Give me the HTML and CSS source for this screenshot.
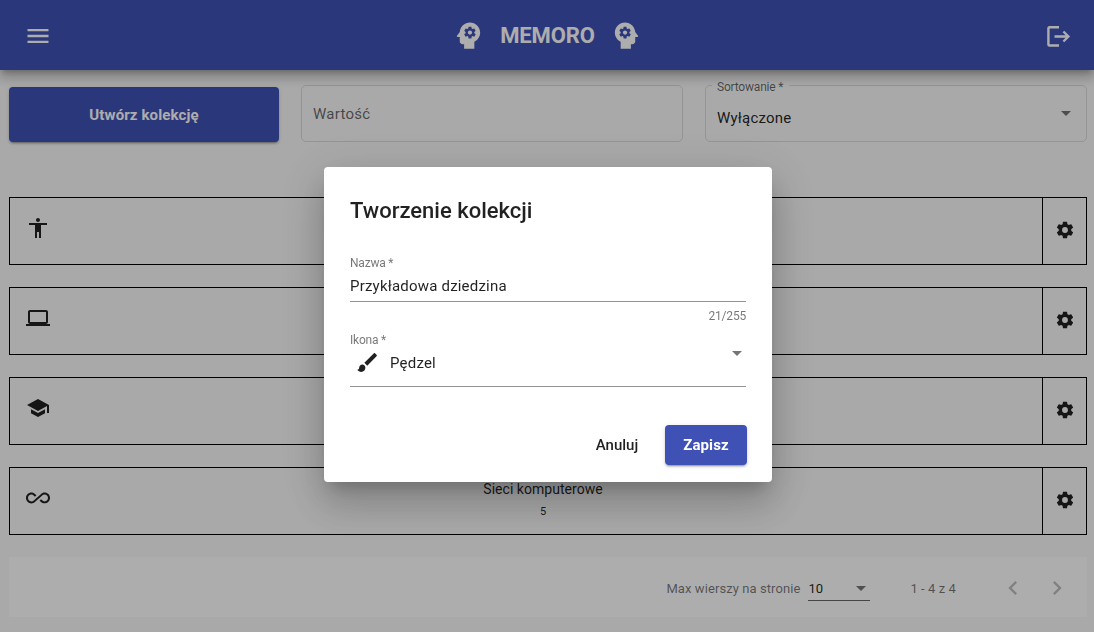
FILE: index.html
```html
<!DOCTYPE html>
<html lang="pl">
<head>
<meta charset="utf-8">
<title>Memoro</title>
<link rel="stylesheet" href="styles.css">
</head>
<body>
<svg class="sprite" aria-hidden="true">
  <symbol id="head" viewBox="0 0 24 24"><path fill-rule="evenodd" d="M13 3C9.25 3 6.2 5.94 6.02 9.64L4.1 12.2c-.25.33-.01.8.4.8H6v3c0 1.1.9 2 2 2h1v3h7v-4.68c2.36-1.12 4-3.53 4-6.32 0-3.87-3.13-7-7-7zm3 7c0 .13-.01.26-.02.39l.83.66c.08.06.1.16.05.25l-.8 1.39c-.05.09-.16.12-.24.09l-.99-.4c-.21.16-.43.29-.67.39L14 13.83c-.01.1-.1.17-.2.17h-1.6c-.1 0-.18-.07-.2-.17l-.15-1.06c-.25-.1-.47-.23-.68-.39l-.99.4c-.09.03-.2 0-.25-.09l-.8-1.39c-.05-.08-.03-.19.05-.25l.84-.66c-.01-.13-.02-.26-.02-.39s.02-.27.04-.39l-.85-.66c-.08-.06-.1-.16-.05-.26l.8-1.38c.05-.09.15-.12.24-.09l1 .4c.2-.15.43-.29.67-.39L12 6.17c.02-.1.1-.17.2-.17h1.6c.1 0 .18.07.2.17l.15 1.06c.24.1.46.23.67.39l1-.4c.09-.03.2 0 .24.09l.8 1.38c.05.09.03.2-.05.26l-.85.66c.03.12.04.25.04.39z"/><circle cx="13" cy="10" r="1.45"/></symbol>
  <symbol id="cog" viewBox="0 0 24 24"><path d="M12 15.5A3.5 3.5 0 0 1 8.500 12 3.500 3.500 0 0 1 12 8.500a3.500 3.500 0 0 1 3.500 3.500 3.500 3.500 0 0 1-3.500 3.500m7.430-2.530c.040-.320.070-.640.070-.970s-.030-.660-.070-1l2.110-1.630c.190-.150.240-.420.120-.640l-2-3.460c-.120-.220-.390-.310-.610-.220l-2.490 1c-.520-.390-1.060-.730-1.690-.980l-.370-2.650A.506.506 0 0 0 14 2h-4c-.250 0-.460.180-.500.420l-.370 2.650c-.630.250-1.170.590-1.690.980l-2.490-1c-.220-.090-.490 0-.610.220l-2 3.460c-.130.220-.070.490.120.640L4.570 11c-.040.340-.070.670-.070 1s.030.650.070.970l-2.110 1.660c-.190.150-.250.420-.120.640l2 3.460c.120.220.390.300.610.220l2.490-1.010c.520.400 1.060.740 1.690.990l.370 2.650c.040.240.250.420.500.420h4c.250 0 .460-.180.500-.420l.370-2.650c.630-.260 1.170-.590 1.690-.990l2.490 1.010c.220.080.490 0 .610-.220l2-3.460c.120-.220.070-.490-.120-.640z"/></symbol>
</svg>

<header class="toolbar">
  <svg class="menu-icon" viewBox="0 0 24 24"><path d="M3 18h18v-2H3v2zm0-5h18v-2H3v2zm0-7v2h18V6H3z"/></svg>
  <div class="brand">
    <svg class="head-icon"><use href="#head"/></svg>
    <h1 class="brand-name">MEMORO</h1>
    <svg class="head-icon head-icon-flip"><use href="#head"/></svg>
  </div>
  <svg class="logout-icon" viewBox="0 0 25 23"><path d="M13 2.200H3.400a1 1 0 0 0-1 1v16.300a1 1 0 0 0 1 1H13M8.500 11.500H22.500M17.400 6.500l5 5-5 5"/></svg>
</header>

<main class="page">
  <section class="filters">
    <button class="create-button">Utwórz kolekcję</button>
    <div class="field">Wartość</div>
    <div class="field field-select">
      <span class="field-label">Sortowanie *</span>
      <span class="field-value">Wyłączone</span>
      <i class="arrow"></i>
    </div>
  </section>

  <section class="rows">
    <article class="row">
      <svg class="row-icon" viewBox="0 0 24 24"><path d="M12 2c1.100 0 2 .900 2 2s-.900 2-2 2-2-.900-2-2 .900-2 2-2zm9 7h-6v13h-2v-6h-2v6H9V9H3V7h18v2z"/></svg>
      <div class="row-text"></div>
      <div class="row-settings"><svg class="cog-icon"><use href="#cog"/></svg></div>
    </article>
    <article class="row">
      <svg class="row-icon" viewBox="0 0 24 24"><path d="M20 18c1.100 0 1.990-.900 1.990-2L22 6c0-1.100-.900-2-2-2H4c-1.100 0-2 .900-2 2v10c0 1.100.900 2 2 2H0v2h24v-2h-4zM4 6h16v10H4V6z"/></svg>
      <div class="row-text"></div>
      <div class="row-settings"><svg class="cog-icon"><use href="#cog"/></svg></div>
    </article>
    <article class="row">
      <svg class="row-icon" viewBox="0 0 24 24"><path d="M5 13.180v4L12 21l7-3.820v-4L12 17l-7-3.820zM12 3L1 9l11 6 9-4.910V17h2V9L12 3z"/></svg>
      <div class="row-text"></div>
      <div class="row-settings"><svg class="cog-icon"><use href="#cog"/></svg></div>
    </article>
    <article class="row">
      <svg class="row-icon" viewBox="0 0 24 24"><path d="M18.600 6.620c-1.440 0-2.800.560-3.770 1.530L12 10.660 10.480 12h.010L7.800 14.390c-.640.640-1.490.990-2.400.990-1.870 0-3.390-1.510-3.390-3.380S3.530 8.620 5.400 8.620c.910 0 1.760.350 2.440 1.030l1.130 1 1.510-1.340L9.220 8.200C8.200 7.180 6.840 6.620 5.400 6.620 2.420 6.620 0 9.040 0 12s2.420 5.380 5.400 5.380c1.440 0 2.800-.560 3.770-1.530l2.830-2.500.010.010L13.520 12h-.010l2.690-2.390c.640-.640 1.490-.990 2.400-.990 1.870 0 3.390 1.510 3.390 3.380s-1.520 3.380-3.390 3.380c-.900 0-1.760-.350-2.440-1.030l-1.140-1.010-1.510 1.340 1.270 1.120c1.020 1.010 2.370 1.570 3.820 1.570 2.980 0 5.400-2.410 5.400-5.380s-2.420-5.370-5.400-5.370z"/></svg>
      <div class="row-text"><span class="row-name">Sieci komputerowe</span><span class="row-count">5</span></div>
      <div class="row-settings"><svg class="cog-icon"><use href="#cog"/></svg></div>
    </article>
  </section>

  <footer class="paginator">
    <span class="page-label">Max wierszy na stronie</span>
    <span class="page-size">10<i class="arrow"></i></span>
    <span class="page-range">1 - 4 z 4</span>
    <svg class="page-icon" viewBox="0 0 24 24"><path d="M15.410 7.410L14 6l-6 6 6 6 1.410-1.410L10.830 12z"/></svg>
    <svg class="page-icon" viewBox="0 0 24 24"><path d="M10 6L8.590 7.410 13.170 12l-4.580 4.590L10 18l6-6z"/></svg>
  </footer>
</main>

<div class="backdrop">
  <div class="dialog">
    <h2 class="dialog-title">Tworzenie kolekcji</h2>
    <div class="input">
      <span class="input-label">Nazwa *</span>
      <span class="input-value">Przykładowa dziedzina</span>
    </div>
    <div class="counter">21/255</div>
    <div class="input input-icon">
      <span class="input-label">Ikona *</span>
      <div class="input-option">
        <svg class="brush-icon" viewBox="0 0 24 24"><path d="M7 14c-1.660 0-3 1.340-3 3 0 1.310-1.160 2-2 2 .920 1.220 2.490 2 4 2 2.210 0 4-1.790 4-4 0-1.660-1.340-3-3-3zm13.710-9.370l-1.340-1.340c-.390-.390-1.020-.390-1.410 0L9 12.250 11.750 15l8.960-8.960c.390-.390.390-1.020 0-1.410z"/></svg>
        <span class="input-value">Pędzel</span>
        <i class="arrow"></i>
      </div>
    </div>
    <div class="actions">
      <button class="cancel-button">Anuluj</button>
      <button class="save-button">Zapisz</button>
    </div>
  </div>
</div>
</body>
</html>
```

FILE: styles.css
```css
* { box-sizing: border-box; }

body {
  margin: 0;
  height: 632px;
  overflow: hidden;
  background: #fafafa;
  color: rgba(0, 0, 0, .87);
  font-family: Roboto, "Liberation Sans", sans-serif;
}

svg { display: block; flex: none; fill: currentColor; }
button { border: 0; font-family: inherit; }
.sprite { display: none; }

.arrow {
  border: 5px solid transparent;
  border-top-color: rgba(0, 0, 0, .54);
  border-bottom-width: 0;
}

/* Toolbar */
.toolbar {
  position: relative;
  display: flex;
  align-items: center;
  justify-content: space-between;
  height: 70px;
  padding: 0 23px;
  background: #3f51b5;
  color: #fff;
  box-shadow: 0 5px 5px -3px rgba(0, 0, 0, .2), 0 8px 10px 1px rgba(0, 0, 0, .14), 0 3px 14px 2px rgba(0, 0, 0, .12);
}
.menu-icon { width: 28px; height: 28px; margin: 2px 0 0 1px; }
.brand { display: flex; align-items: center; gap: 14px; margin-right: 3px; }
.brand-name { margin: 0; padding-top: 2px; font-size: 22px; line-height: 32px; font-weight: 700; letter-spacing: -.1px; }
.head-icon { width: 35px; height: 35px; }
.head-icon-flip { transform: scaleX(-1); }
.logout-icon {
  width: 25px;
  height: 23px;
  margin-top: 2px;
  fill: none;
  stroke: currentColor;
  stroke-width: 2.4;
}

/* Page */
.page { padding: 15px 7px 0 9px; }
.filters { display: grid; grid-template-columns: 270px 382px 382px; gap: 22px; }
.create-button {
  height: 55px;
  margin-top: 2px;
  padding-top: 2px;
  border-radius: 4px;
  background: #3f51b5;
  color: #fff;
  font-size: 15px;
  font-weight: 700;
  letter-spacing: .12px;
  box-shadow: 0 3px 1px -2px rgba(0, 0, 0, .2), 0 2px 2px rgba(0, 0, 0, .14), 0 1px 5px rgba(0, 0, 0, .12);
}
.field {
  display: flex;
  align-items: center;
  height: 57px;
  padding: 0 15px 0 11px;
  border: 1px solid rgba(0, 0, 0, .12);
  border-radius: 5px;
  color: rgba(0, 0, 0, .6);
  font-size: 15px;
  letter-spacing: .25px;
}
.field-select { position: relative; justify-content: space-between; }
.field-label {
  position: absolute;
  top: -8px;
  left: 6px;
  width: 77px;
  padding: 0 5px;
  background: linear-gradient(#f6f6f6, #f6f6f6) 0 7px / 100% 1px no-repeat;
  font-size: 12px;
  line-height: 18px;
  letter-spacing: -.2px;
  white-space: nowrap;
}
.field-value { padding-top: 8px; color: rgba(0, 0, 0, .87); letter-spacing: .2px; }

.rows { display: grid; gap: 22px; margin-top: 55px; }
.row { display: flex; height: 68px; border: 1px solid #000; }
.row-icon { width: 24px; height: 24px; margin: 18px 0 0 16px; }
.row-text {
  display: flex;
  flex: 1;
  flex-direction: column;
  align-items: center;
  padding: 11px 0 0 24px;
  margin-left: -30px;
}
.row-name { font-size: 14px; line-height: 20px; letter-spacing: .03px; }
.row-count { margin-top: 4px; font-size: 11px; line-height: 18px; }
.row-settings {
  display: flex;
  align-items: center;
  justify-content: center;
  width: 44px;
  padding: 0 0 2px 1px;
  border-left: 1px solid #000;
}
.cog-icon { width: 20px; height: 20px; }

.paginator {
  display: flex;
  align-items: center;
  justify-content: flex-end;
  height: 60px;
  margin-top: 22px;
  padding: 3px 16px 0 0;
  background: #fff;
  color: rgba(0, 0, 0, .54);
  font-size: 13px;
  letter-spacing: .08px;
}
.page-size {
  display: flex;
  align-items: center;
  justify-content: space-between;
  width: 62px;
  height: 24px;
  margin: 0 40px 0 8px;
  padding-right: 4px;
  border-bottom: 1px solid rgba(0, 0, 0, .6);
  color: rgba(0, 0, 0, .87);
}
.page-range { margin-right: 43px; }
.page-icon { width: 28px; height: 28px; margin-top: -1px; color: rgba(0, 0, 0, .26); }
.page-icon + .page-icon { margin-left: 16px; }

/* Dialog */
.backdrop {
  position: fixed;
  inset: 0;
  display: flex;
  justify-content: center;
  align-items: flex-start;
  padding: 167px 0 0 2px;
  background: rgba(0, 0, 0, .32);
}
.dialog {
  width: 448px;
  height: 315px;
  padding: 28px 26px 0;
  border-radius: 4px;
  background: #fff;
  box-shadow: 0 11px 15px -7px rgba(0, 0, 0, .2), 0 24px 38px 3px rgba(0, 0, 0, .14), 0 9px 46px 8px rgba(0, 0, 0, .12);
}
.dialog-title { margin: 0; font-size: 22px; line-height: 32px; font-weight: 500; }
.input {
  display: flex;
  flex-direction: column;
  height: 48px;
  margin-top: 27px;
  border-bottom: 1px solid rgba(0, 0, 0, .42);
}
.input-label { color: rgba(0, 0, 0, .54); font-size: 12px; line-height: 18px; letter-spacing: -.2px; }
.input-value { font-size: 15px; line-height: 28px; letter-spacing: .2px; }
.counter { color: rgba(0, 0, 0, .54); font-size: 12px; line-height: 18px; margin-top: 5px; text-align: right; letter-spacing: -.2px; }
.input-icon { height: 56px; margin-top: 6px; }
.input-option { display: flex; align-items: center; height: 28px; padding: 0 4px 0 5px; }
.brush-icon { width: 25px; height: 25px; margin: -1px 10px 0 0; }
.input-option .arrow { margin: -20px 0 0 auto; }
.actions { display: flex; justify-content: flex-end; margin: 38px -1px 0 0; }
.actions button { height: 40px; padding: 0; border-radius: 4px; font-size: 15px; }
.cancel-button { width: 96px; background: none; color: rgba(0, 0, 0, .87); font-weight: 500; }
.actions .save-button {
  width: 82px;
  background: #3f51b5;
  color: #fff;
  font-weight: 700;
  letter-spacing: .1px;
  box-shadow: 0 3px 1px -2px rgba(0, 0, 0, .2), 0 2px 2px rgba(0, 0, 0, .14), 0 1px 5px rgba(0, 0, 0, .12);
}
```
